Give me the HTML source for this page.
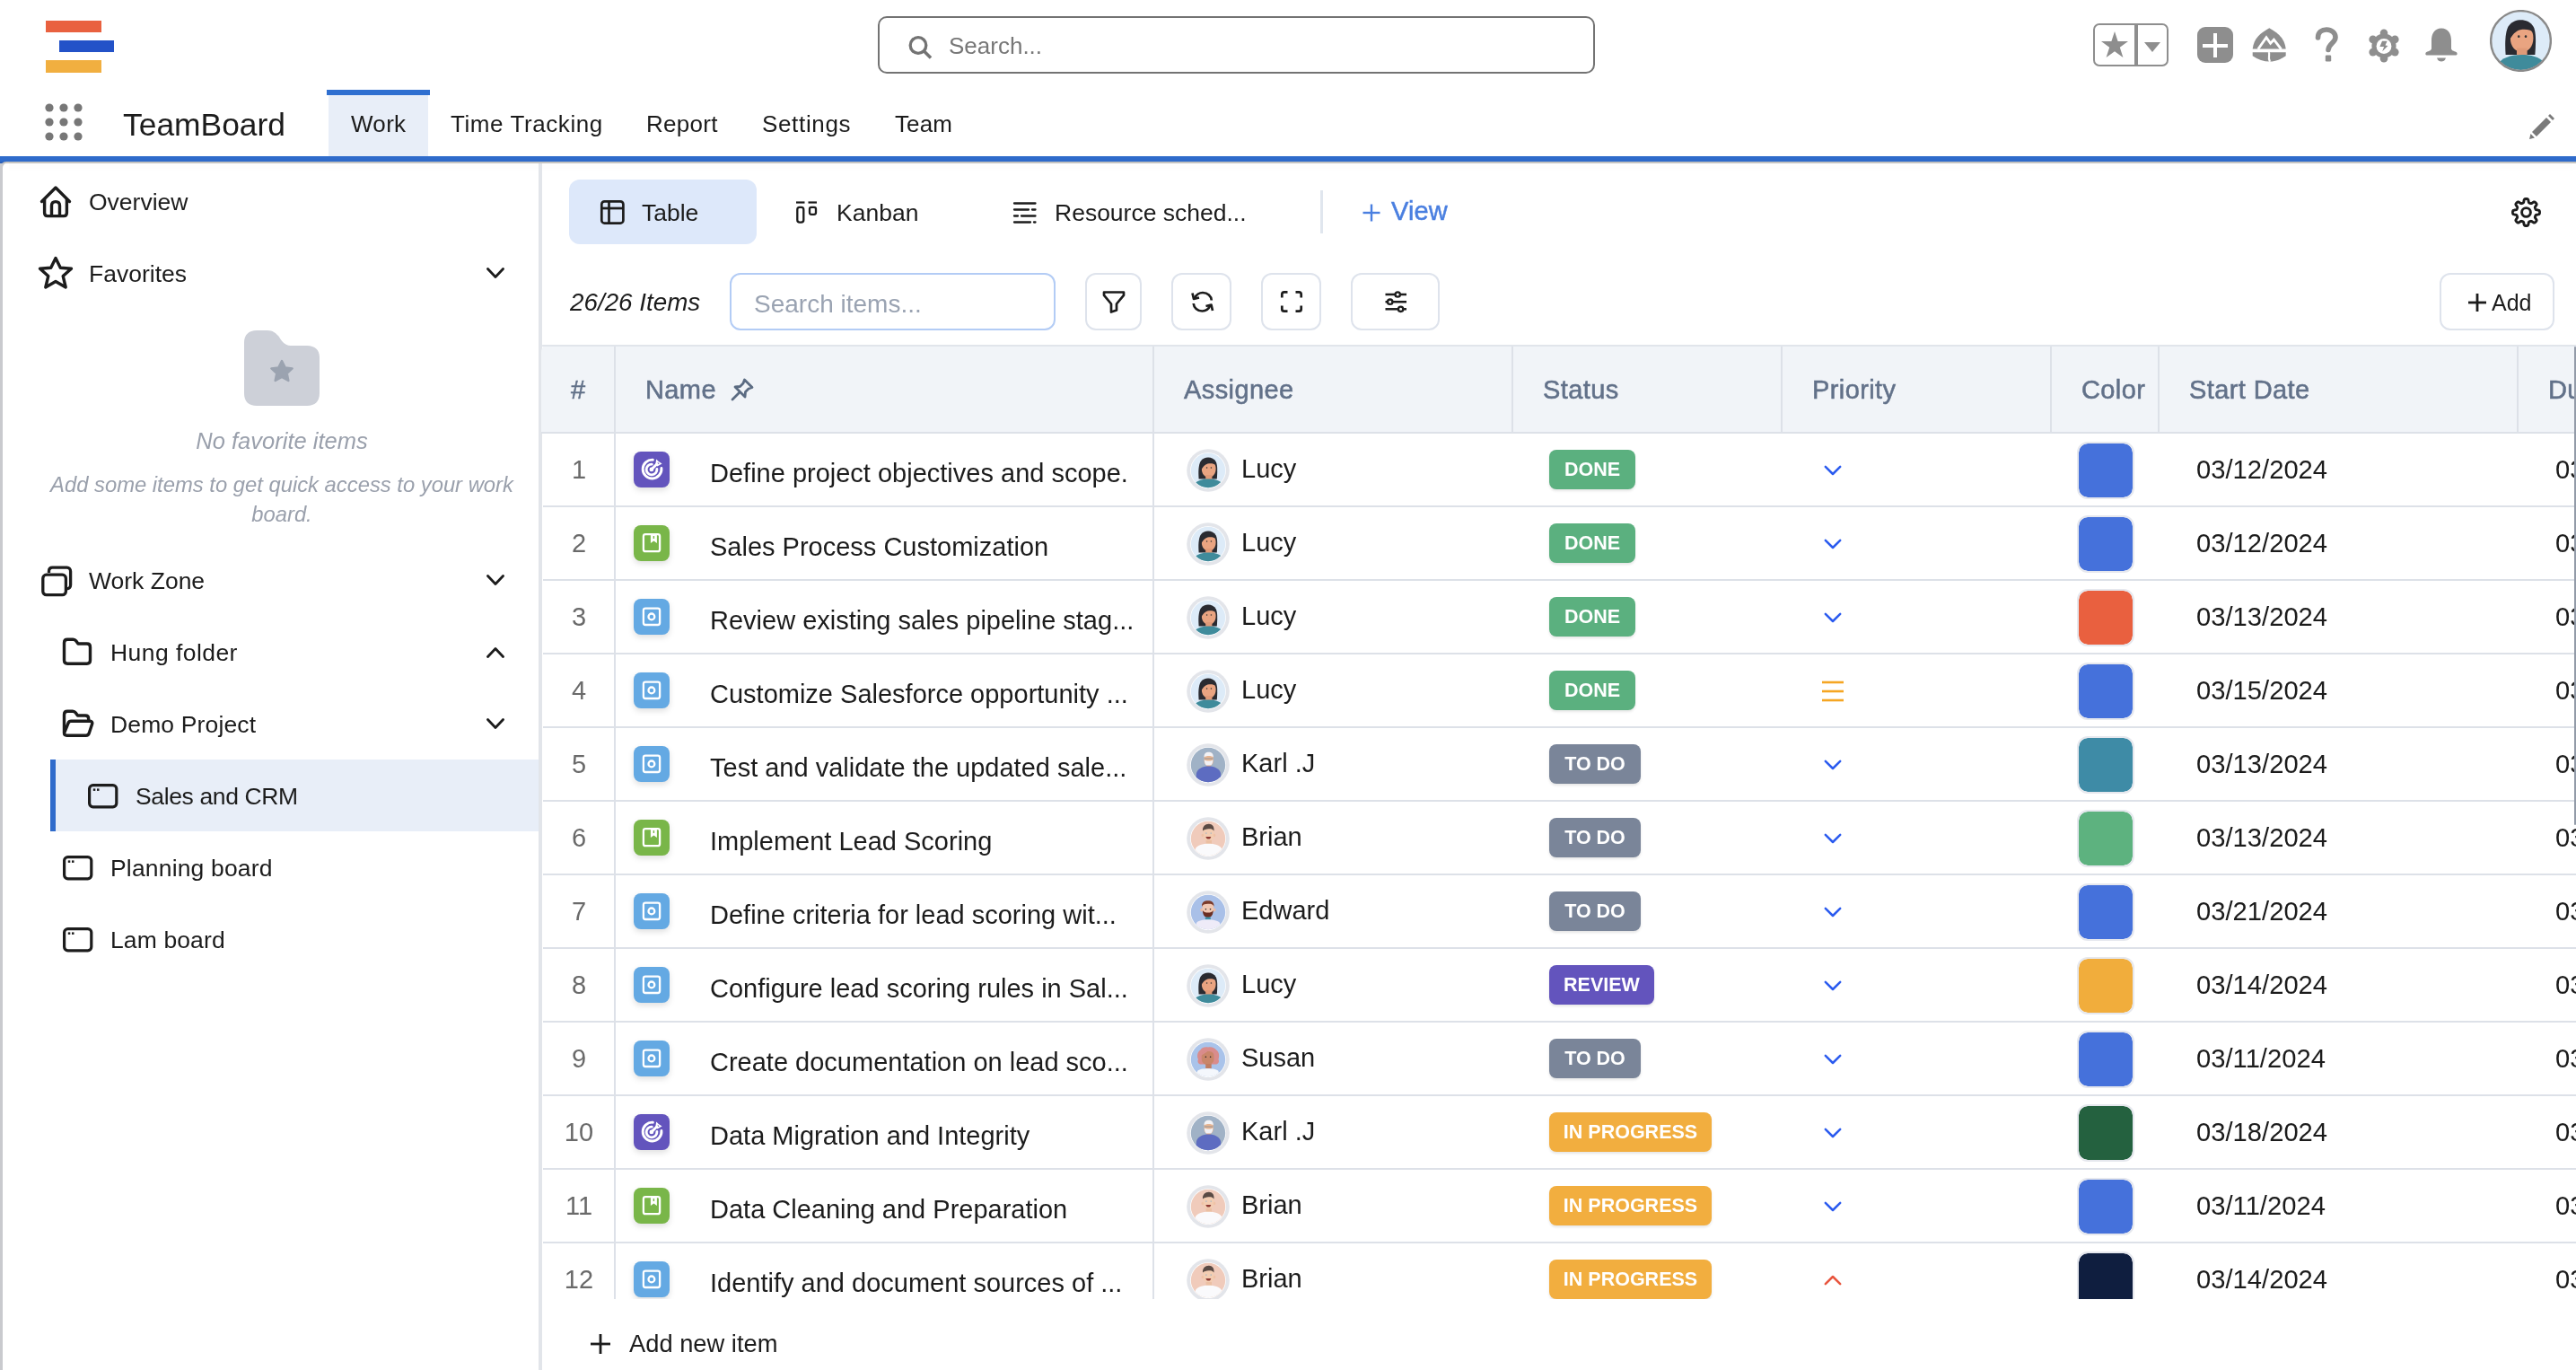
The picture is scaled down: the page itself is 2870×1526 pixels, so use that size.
<!DOCTYPE html>
<html><head><meta charset="utf-8"><title>TeamBoard</title>
<style>
html,body{margin:0;padding:0;width:2870px;height:1526px;overflow:hidden;background:#fff;font-family:"Liberation Sans", sans-serif;}
.a{position:absolute;}
.t{position:absolute;white-space:nowrap;line-height:1;will-change:transform;}
</style></head><body>
<div class="a" style="left:51px;top:23px;width:62px;height:13px;background:#E9613F;"></div><div class="a" style="left:66px;top:45px;width:61px;height:13px;background:#2352C8;"></div><div class="a" style="left:51px;top:67px;width:62px;height:14px;background:#F1AF40;"></div><div class="a" style="left:978px;top:18px;width:799px;height:64px;background:#fff;box-sizing:border-box;border:2px solid #737373;border-radius:10px"></div><svg class="a" style="left:1010px;top:38px" width="32" height="30" viewBox="0 0 32 30"><circle cx="13" cy="12.5" r="8.8" fill="none" stroke="#737373" stroke-width="3.3"/><line x1="19.5" y1="19" x2="27" y2="26.5" stroke="#737373" stroke-width="3.6"/></svg><div class="t" style="left:1056.5px;top:37.9px;font-size:26px;color:#777;font-weight:400;font-style:normal;">Search...</div><div class="a" style="left:2332px;top:26px;width:84px;height:48px;background:transparent;box-sizing:border-box;border:2px solid #8e8e8e;border-radius:7px"></div><div class="a" style="left:2378px;top:27px;width:4px;height:46px;background:#8e8e8e;"></div><svg class="a" style="left:2340px;top:34px" width="32" height="32" viewBox="0 0 32 32"><polygon points="16,1 19.6,12 31,12 21.8,18.8 25.4,30 16,23.2 6.6,30 10.2,18.8 1,12 12.4,12" fill="#8e8e8e"/></svg><svg class="a" style="left:2389px;top:47px" width="18" height="12" viewBox="0 0 18 12"><polygon points="0,0 18,0 9,11" fill="#8e8e8e"/></svg><div class="a" style="left:2448px;top:30px;width:40px;height:40px;background:#8e8e8e;border-radius:9px"></div><div class="a" style="left:2454px;top:49px;width:28px;height:3.5px;background:#fff;"></div><div class="a" style="left:2466px;top:36.5px;width:4px;height:27px;background:#fff;"></div><svg class="a" style="left:2508px;top:30px" width="40" height="40" viewBox="0 0 40 40"><path d="M20.3 1.3 C 10 7, 3 13, 1.7 24.6 L38.7 24.6 C 37.5 13, 30.5 7, 20.3 1.3 Z" fill="#8e8e8e"/><path d="M1.7 28.3 L38.7 28.3 L38.7 32.3 C 33 36.5, 26 38.6, 20.3 38.6 C 14.5 38.6, 7.5 36.5, 1.7 32.3 Z" fill="#8e8e8e"/><path d="M7.8 24.8 L17 11.6 L21.6 18.2 L25.4 14.2 L33.6 24.8" fill="none" stroke="#fff" stroke-width="2.8" stroke-linejoin="miter"/><path d="M19.5 28 C 21.8 30.5, 18 33, 21 38.8" fill="none" stroke="#fff" stroke-width="2.2"/></svg><svg class="a" style="left:2577px;top:30px" width="30" height="40" viewBox="0 0 30 40"><path d="M5.5 12 C 5.5 6, 10 3, 15 3 C 20.5 3, 25 6.5, 25 11.5 C 25 17.5, 17.5 18.5, 17 25.5" fill="none" stroke="#8e8e8e" stroke-width="5.6" stroke-linecap="round"/><rect x="13.8" y="31.5" width="6.4" height="7" rx="1.2" fill="#8e8e8e"/></svg><svg class="a" style="left:2638px;top:31.5px" width="36" height="38" viewBox="0 0 36 38"><circle cx="18" cy="19" r="13.6" fill="#8e8e8e"/><circle cx="18.00" cy="4.80" r="4.3" fill="#8e8e8e"/><circle cx="30.30" cy="11.90" r="4.3" fill="#8e8e8e"/><circle cx="30.30" cy="26.10" r="4.3" fill="#8e8e8e"/><circle cx="18.00" cy="33.20" r="4.3" fill="#8e8e8e"/><circle cx="5.70" cy="26.10" r="4.3" fill="#8e8e8e"/><circle cx="5.70" cy="11.90" r="4.3" fill="#8e8e8e"/><circle cx="18" cy="19.5" r="8.4" fill="#fff"/><path d="M16 13.8 L21.6 13.8 L19.5 18.6 L22.5 18.9 L16.2 25.2 L18.1 20 L13.4 20 Z" fill="#8e8e8e"/></svg><svg class="a" style="left:2701px;top:31px" width="38" height="38" viewBox="0 0 38 38"><path d="M19 0.5 C 27 0.5, 30 7, 30 14 L30 23 C 30 25, 33 26, 35.5 27 C 37 27.5, 37 30.5, 35.5 30.5 L2.5 30.5 C 1 30.5, 1 27.5, 2.5 27 C 5 26, 8 25, 8 23 L8 14 C 8 7, 11 0.5, 19 0.5 Z" fill="#8e8e8e"/><path d="M14 33.5 L24 33.5 C 23 36.5, 21 37.5, 19 37.5 C 17 37.5, 15 36.5, 14 33.5 Z" fill="#8e8e8e"/></svg><svg class="a" style="left:2773.5px;top:10.5px" width="69" height="69" viewBox="8.7 8.7 42.6 42.6"><defs><clipPath id="cpa"><circle cx="30" cy="30" r="20"/></clipPath></defs><g clip-path="url(#cpa)"><rect x="0" y="0" width="60" height="60" fill="#DDEBF8"/><path d="M19.6 39.5 C 19 32, 19.2 24, 21.5 20 C 23.8 16.5, 27 15.6, 30 15.6 C 33.5 15.6, 37 17, 38.8 20.5 C 40.6 24, 40.4 32, 39.8 39.5 Z" fill="#2A2B31"/><path d="M22.8 28 C 22.8 22.5, 26 20.5, 30.8 20.5 C 35.5 20.5, 38.6 22.5, 38.6 28 C 38.6 34, 35.2 37.6, 30.8 37.6 C 26.3 37.6, 22.8 34, 22.8 28 Z" fill="#E9A481"/><path d="M22 30 C 21.5 21, 25.5 17.5, 30.5 17.5 C 35 17.5, 38.5 19.5, 38.7 24 C 36.5 22.3, 33 21.8, 29.5 22.5 C 26.5 23.2, 24 26, 22 30 Z" fill="#2A2B31"/><rect x="27.2" y="35" width="7.2" height="5" fill="#E09A78"/><circle cx="28.6" cy="27" r="0.8" fill="#333"/><circle cx="33.4" cy="27" r="0.8" fill="#333"/><path d="M14.5 50 L15.5 44.5 C 18 41.2, 24 39.6, 30.5 39.6 C 37 39.6, 43 41.2, 45.5 44.5 L46.5 50 Z" fill="#3F8B9B"/></g><circle cx="30" cy="30" r="20.6" fill="none" stroke="#8a8a8a" stroke-width="1.5"/></svg><svg class="a" style="left:50px;top:115px" width="42" height="42" viewBox="0 0 42 42"><circle cx="5" cy="5" r="4.6" fill="#777"/><circle cx="5" cy="21" r="4.6" fill="#777"/><circle cx="5" cy="37" r="4.6" fill="#777"/><circle cx="21" cy="5" r="4.6" fill="#777"/><circle cx="21" cy="21" r="4.6" fill="#777"/><circle cx="21" cy="37" r="4.6" fill="#777"/><circle cx="37" cy="5" r="4.6" fill="#777"/><circle cx="37" cy="21" r="4.6" fill="#777"/><circle cx="37" cy="37" r="4.6" fill="#777"/></svg><div class="t" style="left:137.0px;top:121.9px;font-size:35.4px;color:#1c1c1c;font-weight:400;font-style:normal;">TeamBoard</div><div class="a" style="left:364px;top:100px;width:115px;height:6px;background:#2F6FD0;"></div><div class="a" style="left:366px;top:106px;width:111px;height:68px;background:#E8EEF8;"></div><div class="t" style="left:391.4px;top:124.9px;font-size:26px;color:#1c1c1c;font-weight:400;font-style:normal;letter-spacing:0.3px">Work</div><div class="t" style="left:502.3px;top:124.9px;font-size:26px;color:#1c1c1c;font-weight:400;font-style:normal;letter-spacing:0.58px">Time Tracking</div><div class="t" style="left:719.5px;top:124.9px;font-size:26px;color:#1c1c1c;font-weight:400;font-style:normal;letter-spacing:0.3px">Report</div><div class="t" style="left:848.8px;top:124.9px;font-size:26px;color:#1c1c1c;font-weight:400;font-style:normal;letter-spacing:0.66px">Settings</div><div class="t" style="left:997.2px;top:124.9px;font-size:26px;color:#1c1c1c;font-weight:400;font-style:normal;letter-spacing:0.1px">Team</div><svg class="a" style="left:2816px;top:126px" width="32" height="30" viewBox="0 0 32 30"><path d="M5 21 L21 5 L26 10 L10 26 Z" fill="#7a7a7a"/><path d="M23 3 L25 1 L30 6 L28 8 Z" fill="#7a7a7a"/><path d="M3.5 23 L8 27.5 L2 29 Z" fill="#7a7a7a"/></svg><div class="a" style="left:0px;top:174px;width:2870px;height:6px;background:#2F6BCB;"></div><div class="a" style="left:0px;top:180px;width:2870px;height:2px;background:#C4C3C1;box-shadow:0 3px 10px rgba(0,0,0,0.06)"></div><div class="a" style="left:0px;top:180px;width:8px;height:8px;background:#2A5FB8;"></div><div class="a" style="left:0px;top:180px;width:10px;height:10px;background:#fff;box-sizing:border-box;border-top:2px solid #C9C6C2;border-left:3px solid #C9CACE;border-top-left-radius:7px"></div><div class="a" style="left:0px;top:182px;width:3px;height:1344px;background:#C9CACE;"></div><div class="a" style="left:600px;top:182px;width:4px;height:1344px;background:#E2E5EA;"></div><svg class="a" style="left:42px;top:204px" width="40" height="40" viewBox="0 0 40 40"><path d="M4.5 20.5 L20 5 L35.5 20.5" fill="none" stroke="#1c1c1c" stroke-width="3.4" stroke-linecap="round" stroke-linejoin="round"/><path d="M7.6 18 L7.6 33 C7.6 35.5 9 36.6 11 36.6 L29 36.6 C31 36.6 32.4 35.5 32.4 33 L32.4 18" fill="none" stroke="#1c1c1c" stroke-width="3.4" stroke-linejoin="round"/><path d="M15.5 36 L15.5 25 C15.5 22 17.5 20.6 20 20.6 C22.5 20.6 24.5 22 24.5 25 L24.5 36" fill="none" stroke="#1c1c1c" stroke-width="3.4"/></svg><div class="t" style="left:99.0px;top:211.5px;font-size:26.5px;color:#1c1c1c;font-weight:400;font-style:normal;">Overview</div><svg class="a" style="left:42px;top:284px" width="40" height="40" viewBox="0 0 40 40"><polygon points="20,3.5 25.3,14.2 37.5,15.2 28.2,23.5 31.2,36 20,29.5 8.8,36 11.8,23.5 2.5,15.2 14.7,14.2" fill="none" stroke="#1c1c1c" stroke-width="3.4" stroke-linejoin="round"/></svg><div class="t" style="left:99.0px;top:291.5px;font-size:26.5px;color:#1c1c1c;font-weight:400;font-style:normal;">Favorites</div><svg class="a" style="left:541.5px;top:297.5px" width="20" height="12" viewBox="0 0 20 12"><path d="M1.5 1.5 L10.0 10.5 L18.5 1.5" fill="none" stroke="#1c1c1c" stroke-width="2.8" stroke-linecap="round" stroke-linejoin="round"/></svg><svg class="a" style="left:272px;top:368px" width="84" height="84" viewBox="0 0 84 84"><path d="M0 14 C0 5 5 0 14 0 L26 0 C32 0 35 3 38 6 C41 10 44 17 52 17 L70 17 C79 17 84 22 84 30 L84 70 C84 79 79 84 70 84 L14 84 C5 84 0 79 0 70 Z" fill="#CDD0D8"/><path d="M42 34 L45.6 41.4 L53.6 42.4 L47.7 47.9 L49.3 56 L42 52 L34.7 56 L36.3 47.9 L30.4 42.4 L38.4 41.4 Z" fill="#9BA3B0" stroke="#9BA3B0" stroke-width="2.5" stroke-linejoin="round"/></svg><div class="t" style="left:-86.0px;width:800px;text-align:center;top:479.3px;font-size:25.5px;color:#9AA0AC;font-weight:400;font-style:italic">No favorite items</div><div class="t" style="left:-86.0px;width:800px;text-align:center;top:528.3px;font-size:23.8px;color:#9AA0AC;font-weight:400;font-style:italic">Add some items to get quick access to your work</div><div class="t" style="left:-86.0px;width:800px;text-align:center;top:561.3px;font-size:23.8px;color:#9AA0AC;font-weight:400;font-style:italic">board.</div><svg class="a" style="left:44px;top:630px" width="38" height="36" viewBox="0 0 38 36"><path d="M10.5 8 L10.5 6.5 C10.5 4, 12 2.2, 14.5 2.2 L30.5 2.2 C33 2.2, 34.6 4, 34.6 6.5 L34.6 21.5 C34.6 24, 33 25.8, 30.5 25.8 L29.5 25.8" fill="none" stroke="#1c1c1c" stroke-width="3.3" stroke-linejoin="round"/><rect x="3.8" y="10.2" width="25.6" height="22.5" rx="4" fill="none" stroke="#1c1c1c" stroke-width="3.3"/></svg><div class="t" style="left:99.0px;top:633.5px;font-size:26.5px;color:#1c1c1c;font-weight:400;font-style:normal;">Work Zone</div><svg class="a" style="left:541.5px;top:639.5px" width="20" height="12" viewBox="0 0 20 12"><path d="M1.5 1.5 L10.0 10.5 L18.5 1.5" fill="none" stroke="#1c1c1c" stroke-width="2.8" stroke-linecap="round" stroke-linejoin="round"/></svg><svg class="a" style="left:68px;top:710px" width="36" height="32" viewBox="0 0 36 32"><path d="M3.5 6 C3.5 3.8 5 2.3 7.2 2.3 L13.5 2.3 C15 2.3 16 3 17 4.2 L19 7 L28.8 7 C31 7 32.5 8.5 32.5 10.7 L32.5 25.5 C32.5 27.7 31 29.2 28.8 29.2 L7.2 29.2 C5 29.2 3.5 27.7 3.5 25.5 Z" fill="none" stroke="#1c1c1c" stroke-width="3.4" stroke-linejoin="round"/></svg><div class="t" style="left:123.0px;top:713.5px;font-size:26.5px;color:#1c1c1c;font-weight:400;font-style:normal;letter-spacing:0.44px">Hung folder</div><svg class="a" style="left:541.5px;top:721px" width="20" height="12" viewBox="0 0 20 12"><path d="M1.5 10.5 L10.0 1.5 L18.5 10.5" fill="none" stroke="#1c1c1c" stroke-width="2.8" stroke-linecap="round" stroke-linejoin="round"/></svg><svg class="a" style="left:68px;top:790px" width="38" height="32" viewBox="0 0 38 32"><path d="M3.5 26 L3.5 6 C3.5 3.8 5 2.3 7.2 2.3 L13 2.3 C14.5 2.3 15.5 3 16.5 4.2 L18.5 7 L27 7 C29.2 7 30.7 8.5 30.7 10.7 L30.7 13" fill="none" stroke="#1c1c1c" stroke-width="3.4" stroke-linejoin="round"/><path d="M3.5 26.5 L8 15.5 C8.6 14 9.6 13.3 11.2 13.3 L32.5 13.3 C34.3 13.3 35.2 14.6 34.7 16.2 L31.3 26.5 C30.8 28.2 29.6 29.2 27.8 29.2 L6.5 29.2 C4.5 29.2 3.5 28 3.5 26.5 Z" fill="none" stroke="#1c1c1c" stroke-width="3.4" stroke-linejoin="round"/></svg><div class="t" style="left:123.0px;top:793.5px;font-size:26.5px;color:#1c1c1c;font-weight:400;font-style:normal;letter-spacing:0.14px">Demo Project</div><svg class="a" style="left:541.5px;top:800px" width="20" height="12" viewBox="0 0 20 12"><path d="M1.5 1.5 L10.0 10.5 L18.5 1.5" fill="none" stroke="#1c1c1c" stroke-width="2.8" stroke-linecap="round" stroke-linejoin="round"/></svg><div class="a" style="left:56px;top:846px;width:6px;height:80px;background:#2F6BCB;"></div><div class="a" style="left:62px;top:846px;width:538px;height:80px;background:#E8EEF8;"></div><svg class="a" style="left:97.5px;top:873px" width="34" height="28" viewBox="0 0 34 28"><rect x="1.6" y="1.6" width="30.2" height="24.2" rx="4" fill="none" stroke="#1c1c1c" stroke-width="3.2"/><rect x="5.8" y="5.4" width="2.5" height="2.5" fill="#1c1c1c"/><rect x="10" y="5.4" width="2.5" height="2.5" fill="#1c1c1c"/></svg><div class="t" style="left:151.0px;top:873.5px;font-size:26.5px;color:#1c1c1c;font-weight:400;font-style:normal;letter-spacing:-0.37px">Sales and CRM</div><svg class="a" style="left:69.5px;top:953px" width="34" height="28" viewBox="0 0 34 28"><rect x="1.6" y="1.6" width="30.2" height="24.2" rx="4" fill="none" stroke="#1c1c1c" stroke-width="3.2"/><rect x="5.8" y="5.4" width="2.5" height="2.5" fill="#1c1c1c"/><rect x="10" y="5.4" width="2.5" height="2.5" fill="#1c1c1c"/></svg><div class="t" style="left:123.0px;top:953.5px;font-size:26.5px;color:#1c1c1c;font-weight:400;font-style:normal;letter-spacing:0.17px">Planning board</div><svg class="a" style="left:69.5px;top:1033px" width="34" height="28" viewBox="0 0 34 28"><rect x="1.6" y="1.6" width="30.2" height="24.2" rx="4" fill="none" stroke="#1c1c1c" stroke-width="3.2"/><rect x="5.8" y="5.4" width="2.5" height="2.5" fill="#1c1c1c"/><rect x="10" y="5.4" width="2.5" height="2.5" fill="#1c1c1c"/></svg><div class="t" style="left:123.0px;top:1033.5px;font-size:26.5px;color:#1c1c1c;font-weight:400;font-style:normal;letter-spacing:0.12px">Lam board</div><div class="a" style="left:634px;top:200px;width:209px;height:72px;background:#DDE8FA;border-radius:12px"></div><svg class="a" style="left:667px;top:221px" width="30" height="30" viewBox="0 0 30 30"><rect x="3.3" y="3.3" width="24.1" height="24.3" rx="3.2" fill="none" stroke="#1c1c1c" stroke-width="2.7"/><line x1="3.3" y1="11" x2="27.4" y2="11" stroke="#1c1c1c" stroke-width="2.7"/><line x1="11.5" y1="3.3" x2="11.5" y2="27.6" stroke="#1c1c1c" stroke-width="2.7"/></svg><div class="t" style="left:715.0px;top:223.5px;font-size:26.5px;color:#1c1c1c;font-weight:400;font-style:normal;">Table</div><svg class="a" style="left:884px;top:222px" width="30" height="28" viewBox="0 0 30 28"><line x1="3" y1="3.5" x2="12.5" y2="3.5" stroke="#1c1c1c" stroke-width="2.2"/><line x1="16.5" y1="3.5" x2="26" y2="3.5" stroke="#1c1c1c" stroke-width="2.2"/><rect x="4.3" y="8.8" width="7" height="16.9" rx="2.6" fill="none" stroke="#1c1c1c" stroke-width="2.3"/><rect x="18" y="8.8" width="7" height="8" rx="2" fill="none" stroke="#1c1c1c" stroke-width="2.3"/></svg><div class="t" style="left:932.0px;top:223.5px;font-size:26.5px;color:#1c1c1c;font-weight:400;font-style:normal;">Kanban</div><svg class="a" style="left:1127px;top:223px" width="30" height="28" viewBox="0 0 30 28"><line x1="3" y1="3.5" x2="26.5" y2="3.5" stroke="#1c1c1c" stroke-width="2.3" stroke-linecap="round"/><line x1="3" y1="10.5" x2="19" y2="10.5" stroke="#1c1c1c" stroke-width="2.3" stroke-linecap="round"/><line x1="23" y1="10.5" x2="26.5" y2="10.5" stroke="#1c1c1c" stroke-width="2.3" stroke-linecap="round"/><line x1="3" y1="17.5" x2="7" y2="17.5" stroke="#1c1c1c" stroke-width="2.3" stroke-linecap="round"/><line x1="11" y1="17.5" x2="26.5" y2="17.5" stroke="#1c1c1c" stroke-width="2.3" stroke-linecap="round"/><line x1="3" y1="24.5" x2="21" y2="24.5" stroke="#1c1c1c" stroke-width="2.3" stroke-linecap="round"/><line x1="25" y1="24.5" x2="26.5" y2="24.5" stroke="#1c1c1c" stroke-width="2.3" stroke-linecap="round"/></svg><div class="t" style="left:1174.5px;top:223.5px;font-size:26.5px;color:#1c1c1c;font-weight:400;font-style:normal;">Resource sched...</div><div class="a" style="left:1471px;top:212px;width:3px;height:48px;background:#E0E6EE;"></div><svg class="a" style="left:1516px;top:225px" width="24" height="24" viewBox="0 0 24 24"><line x1="12" y1="2.5" x2="12" y2="21.5" stroke="#4A7FE0" stroke-width="2.4"/><line x1="2.5" y1="12" x2="21.5" y2="12" stroke="#4A7FE0" stroke-width="2.4"/></svg><div class="t" style="left:1550.0px;top:221.3px;font-size:29px;color:#4A7FE0;font-weight:400;font-style:normal;-webkit-text-stroke:0.5px #4A7FE0;letter-spacing:0.1px">View</div><svg class="a" style="left:2796px;top:218px" width="37" height="37" viewBox="0 0 37 37"><path d="M18.50 3.50 L18.89 3.51 L19.28 3.54 L19.67 3.61 L20.05 3.74 L20.41 3.98 L20.72 4.46 L20.95 5.26 L21.11 6.24 L21.25 7.04 L21.44 7.53 L21.67 7.80 L21.92 7.98 L22.18 8.11 L22.44 8.23 L22.71 8.34 L22.98 8.45 L23.25 8.55 L23.52 8.64 L23.82 8.70 L24.18 8.66 L24.66 8.45 L25.33 7.99 L26.13 7.40 L26.85 7.00 L27.41 6.88 L27.84 6.96 L28.20 7.14 L28.52 7.37 L28.82 7.62 L29.11 7.89 L29.38 8.18 L29.63 8.48 L29.86 8.80 L30.04 9.16 L30.12 9.59 L30.00 10.15 L29.60 10.87 L29.01 11.67 L28.55 12.34 L28.34 12.82 L28.30 13.18 L28.36 13.48 L28.45 13.75 L28.55 14.02 L28.66 14.29 L28.77 14.56 L28.89 14.82 L29.02 15.08 L29.20 15.33 L29.47 15.56 L29.96 15.75 L30.76 15.89 L31.74 16.05 L32.54 16.28 L33.02 16.59 L33.26 16.95 L33.39 17.33 L33.46 17.72 L33.49 18.11 L33.50 18.50 L33.49 18.89 L33.46 19.28 L33.39 19.67 L33.26 20.05 L33.02 20.41 L32.54 20.72 L31.74 20.95 L30.76 21.11 L29.96 21.25 L29.47 21.44 L29.20 21.67 L29.02 21.92 L28.89 22.18 L28.77 22.44 L28.66 22.71 L28.55 22.98 L28.45 23.25 L28.36 23.52 L28.30 23.82 L28.34 24.18 L28.55 24.66 L29.01 25.33 L29.60 26.13 L30.00 26.85 L30.12 27.41 L30.04 27.84 L29.86 28.20 L29.63 28.52 L29.38 28.82 L29.11 29.11 L28.82 29.38 L28.52 29.63 L28.20 29.86 L27.84 30.04 L27.41 30.12 L26.85 30.00 L26.13 29.60 L25.33 29.01 L24.66 28.55 L24.18 28.34 L23.82 28.30 L23.52 28.36 L23.25 28.45 L22.98 28.55 L22.71 28.66 L22.44 28.77 L22.18 28.89 L21.92 29.02 L21.67 29.20 L21.44 29.47 L21.25 29.96 L21.11 30.76 L20.95 31.74 L20.72 32.54 L20.41 33.02 L20.05 33.26 L19.67 33.39 L19.28 33.46 L18.89 33.49 L18.50 33.50 L18.11 33.49 L17.72 33.46 L17.33 33.39 L16.95 33.26 L16.59 33.02 L16.28 32.54 L16.05 31.74 L15.89 30.76 L15.75 29.96 L15.56 29.47 L15.33 29.20 L15.08 29.02 L14.82 28.89 L14.56 28.77 L14.29 28.66 L14.02 28.55 L13.75 28.45 L13.48 28.36 L13.18 28.30 L12.82 28.34 L12.34 28.55 L11.67 29.01 L10.87 29.60 L10.15 30.00 L9.59 30.12 L9.16 30.04 L8.80 29.86 L8.48 29.63 L8.18 29.38 L7.89 29.11 L7.62 28.82 L7.37 28.52 L7.14 28.20 L6.96 27.84 L6.88 27.41 L7.00 26.85 L7.40 26.13 L7.99 25.33 L8.45 24.66 L8.66 24.18 L8.70 23.82 L8.64 23.52 L8.55 23.25 L8.45 22.98 L8.34 22.71 L8.23 22.44 L8.11 22.18 L7.98 21.92 L7.80 21.67 L7.53 21.44 L7.04 21.25 L6.24 21.11 L5.26 20.95 L4.46 20.72 L3.98 20.41 L3.74 20.05 L3.61 19.67 L3.54 19.28 L3.51 18.89 L3.50 18.50 L3.51 18.11 L3.54 17.72 L3.61 17.33 L3.74 16.95 L3.98 16.59 L4.46 16.28 L5.26 16.05 L6.24 15.89 L7.04 15.75 L7.53 15.56 L7.80 15.33 L7.98 15.08 L8.11 14.82 L8.23 14.56 L8.34 14.29 L8.45 14.02 L8.55 13.75 L8.64 13.48 L8.70 13.18 L8.66 12.82 L8.45 12.34 L7.99 11.67 L7.40 10.87 L7.00 10.15 L6.88 9.59 L6.96 9.16 L7.14 8.80 L7.37 8.48 L7.62 8.18 L7.89 7.89 L8.18 7.62 L8.48 7.37 L8.80 7.14 L9.16 6.96 L9.59 6.88 L10.15 7.00 L10.87 7.40 L11.67 7.99 L12.34 8.45 L12.82 8.66 L13.18 8.70 L13.48 8.64 L13.75 8.55 L14.02 8.45 L14.29 8.34 L14.56 8.23 L14.82 8.11 L15.08 7.98 L15.33 7.80 L15.56 7.53 L15.75 7.04 L15.89 6.24 L16.05 5.26 L16.28 4.46 L16.59 3.98 L16.95 3.74 L17.33 3.61 L17.72 3.54 L18.11 3.51 L18.50 3.50 Z" fill="none" stroke="#1c1c1c" stroke-width="2.9" stroke-linejoin="round"/><circle cx="18.5" cy="18.5" r="4.9" fill="none" stroke="#1c1c1c" stroke-width="2.9"/></svg><div class="t" style="left:634.5px;top:323.4px;font-size:27.8px;color:#1c1c1c;font-weight:400;font-style:italic;">26/26 Items</div><div class="a" style="left:813px;top:304px;width:363px;height:64px;background:#fff;box-sizing:border-box;border:2px solid #B3CCF5;border-radius:12px"></div><div class="t" style="left:840.0px;top:324.7px;font-size:28px;color:#9AA3B2;font-weight:400;font-style:normal;">Search items...</div><div class="a" style="left:1209px;top:304px;width:63px;height:64px;background:#fff;box-sizing:border-box;border:2px solid #DEE3EC;border-radius:12px"></div><div class="a" style="left:1305px;top:304px;width:67px;height:64px;background:#fff;box-sizing:border-box;border:2px solid #DEE3EC;border-radius:12px"></div><div class="a" style="left:1405px;top:304px;width:67px;height:64px;background:#fff;box-sizing:border-box;border:2px solid #DEE3EC;border-radius:12px"></div><div class="a" style="left:1505px;top:304px;width:99px;height:64px;background:#fff;box-sizing:border-box;border:2px solid #DEE3EC;border-radius:12px"></div><svg class="a" style="left:1227px;top:322px" width="28" height="30" viewBox="0 0 28 30"><path d="M3 3.5 L25 3.5 L25 6.8 L17 16.5 L17 23.5 L11 25.5 L11 16.5 L3 6.8 Z" fill="none" stroke="#1c1c1c" stroke-width="2.7" stroke-linejoin="round"/></svg><svg class="a" style="left:1325.5px;top:323px" width="27" height="26" viewBox="0 0 27 26"><path d="M5 9 C 7 5, 10.5 3, 14 3 C 19.5 3, 23.5 7, 23.8 11.5" fill="none" stroke="#1c1c1c" stroke-width="2.7"/><path d="M22.5 17 C 20.5 21.5, 17 23.5, 13.5 23.5 C 8 23.5, 4 19.5, 3.7 15" fill="none" stroke="#1c1c1c" stroke-width="2.7"/><path d="M2.5 3.5 L4 10 L10 8.5" fill="none" stroke="#1c1c1c" stroke-width="2.7" stroke-linejoin="round"/><path d="M25 23 L23.5 16.5 L17.5 18" fill="none" stroke="#1c1c1c" stroke-width="2.7" stroke-linejoin="round"/></svg><svg class="a" style="left:1426px;top:323px" width="26" height="26" viewBox="0 0 26 26"><path d="M2.3 8.5 L2.3 4.8 C2.3 3.3 3.3 2.3 4.8 2.3 L8.5 2.3" fill="none" stroke="#1c1c1c" stroke-width="2.7"/><path d="M17.5 2.3 L21.2 2.3 C22.7 2.3 23.7 3.3 23.7 4.8 L23.7 8.5" fill="none" stroke="#1c1c1c" stroke-width="2.7"/><path d="M23.7 17.5 L23.7 21.2 C23.7 22.7 22.7 23.7 21.2 23.7 L17.5 23.7" fill="none" stroke="#1c1c1c" stroke-width="2.7"/><path d="M8.5 23.7 L4.8 23.7 C3.3 23.7 2.3 22.7 2.3 21.2 L2.3 17.5" fill="none" stroke="#1c1c1c" stroke-width="2.7"/></svg><svg class="a" style="left:1541px;top:323px" width="28" height="28" viewBox="0 0 28 28"><line x1="2.5" y1="5" x2="26" y2="5" stroke="#1c1c1c" stroke-width="2.5"/><line x1="2.5" y1="13.2" x2="26" y2="13.2" stroke="#1c1c1c" stroke-width="2.5"/><line x1="2.5" y1="21.3" x2="26" y2="21.3" stroke="#1c1c1c" stroke-width="2.5"/><circle cx="16.2" cy="5" r="2.7" fill="#fff" stroke="#1c1c1c" stroke-width="2.3"/><circle cx="7.7" cy="13.2" r="2.7" fill="#fff" stroke="#1c1c1c" stroke-width="2.3"/><circle cx="19.6" cy="21.3" r="2.7" fill="#fff" stroke="#1c1c1c" stroke-width="2.3"/></svg><div class="a" style="left:2718px;top:304px;width:128px;height:64px;background:#fff;box-sizing:border-box;border:2px solid #DEE3EC;border-radius:12px"></div><svg class="a" style="left:2748.5px;top:325.5px" width="22" height="22" viewBox="0 0 22 22"><line x1="11" y1="1" x2="11" y2="21" stroke="#1c1c1c" stroke-width="2.8"/><line x1="1" y1="11" x2="21" y2="11" stroke="#1c1c1c" stroke-width="2.8"/></svg><div class="t" style="left:2776.0px;top:324.8px;font-size:25px;color:#1c1c1c;font-weight:400;font-style:normal;">Add</div><div class="a" style="left:603px;top:384px;width:2267px;height:98px;background:#F1F4F8;border-top-left-radius:8px"></div><div class="a" style="left:603px;top:384px;width:2267px;height:2px;background:#E1E5EB;border-top-left-radius:8px"></div><div class="a" style="left:603px;top:481px;width:2267px;height:2px;background:#DDE1E8;"></div><div class="a" style="left:684px;top:386px;width:2px;height:95px;background:#DDE1E8;"></div><div class="a" style="left:1284px;top:386px;width:2px;height:95px;background:#DDE1E8;"></div><div class="a" style="left:1684px;top:386px;width:2px;height:95px;background:#DDE1E8;"></div><div class="a" style="left:1984px;top:386px;width:2px;height:95px;background:#DDE1E8;"></div><div class="a" style="left:2284px;top:386px;width:2px;height:95px;background:#DDE1E8;"></div><div class="a" style="left:2404px;top:386px;width:2px;height:95px;background:#DDE1E8;"></div><div class="a" style="left:2804px;top:386px;width:2px;height:95px;background:#DDE1E8;"></div><div class="a" style="left:684px;top:483px;width:2px;height:964px;background:#DDE1E8;"></div><div class="a" style="left:1284px;top:483px;width:2px;height:964px;background:#DDE1E8;"></div><div class="t" style="left:636.0px;top:420.4px;font-size:29px;color:#627189;font-weight:400;font-style:normal;-webkit-text-stroke:0.55px #627189;letter-spacing:0.4px">#</div><div class="t" style="left:719.0px;top:420.4px;font-size:29px;color:#627189;font-weight:400;font-style:normal;-webkit-text-stroke:0.55px #627189;letter-spacing:0.4px">Name</div><svg class="a" style="left:813px;top:420px" width="28" height="28" viewBox="0 0 28 28"><path d="M16.5 3 L25 11.5 L21 13 L17.5 16.5 L17 22 L6 11 L11.5 10.5 L15 7 Z" fill="none" stroke="#5B6B82" stroke-width="2.8" stroke-linejoin="round"/><line x1="10.5" y1="17.5" x2="3" y2="25" stroke="#5B6B82" stroke-width="2.8" stroke-linecap="round"/></svg><div class="t" style="left:1319.0px;top:420.4px;font-size:29px;color:#627189;font-weight:400;font-style:normal;-webkit-text-stroke:0.55px #627189;letter-spacing:0.4px">Assignee</div><div class="t" style="left:1718.5px;top:420.4px;font-size:29px;color:#627189;font-weight:400;font-style:normal;-webkit-text-stroke:0.55px #627189;letter-spacing:0.4px">Status</div><div class="t" style="left:2019.0px;top:420.4px;font-size:29px;color:#627189;font-weight:400;font-style:normal;-webkit-text-stroke:0.55px #627189;letter-spacing:0.4px">Priority</div><div class="t" style="left:2318.5px;top:420.4px;font-size:29px;color:#627189;font-weight:400;font-style:normal;-webkit-text-stroke:0.55px #627189;letter-spacing:0.4px">Color</div><div class="t" style="left:2438.8px;top:420.4px;font-size:29px;color:#627189;font-weight:400;font-style:normal;-webkit-text-stroke:0.55px #627189;letter-spacing:0.4px">Start Date</div><div class="t" style="left:2839.0px;top:420.4px;font-size:29px;color:#627189;font-weight:400;font-style:normal;-webkit-text-stroke:0.55px #627189;letter-spacing:0.4px">Du</div><div class="a" style="left:605px;top:483px;width:2265px;height:964px;overflow:hidden"><div class="a" style="left:0;top:80px;width:2265px;height:2px;background:#DDE1E8"></div><div class="t" style="left:10.0px;width:60px;text-align:center;top:26.4px;font-size:29px;color:#6a6a6a;font-weight:400;font-style:normal">1</div><div class="a" style="left:101px;top:20px;width:40px;height:40px"><svg class="a" style="left:0px;top:0px;filter:drop-shadow(0 3px 3px rgba(0,0,0,0.12))" width="40" height="40" viewBox="0 0 40 40"><rect width="40" height="40" rx="8" fill="#6354BD"/><path d="M30.9 18.4 A 10.4 10.4 0 1 1 21.4 9.2" fill="none" stroke="#fff" stroke-width="2.9" stroke-linecap="round"/><path d="M25.9 19.4 A 5.9 5.9 0 1 1 20.3 14.1" fill="none" stroke="#fff" stroke-width="2.9" stroke-linecap="round"/><circle cx="19.9" cy="19.9" r="2.4" fill="#fff"/><line x1="19.9" y1="19.9" x2="26.5" y2="13.3" stroke="#fff" stroke-width="2.9" stroke-linecap="round"/><path d="M24.2 14.6 L25.2 8.6 L27.8 11.0 L31.6 13.6 L26.3 16.6 Z" fill="#fff"/><path d="M26.4 11.8 L27.4 14.0 L28.6 13.2 Z" fill="#6354BD"/></svg></div><div class="t" style="left:186.0px;top:29.9px;font-size:29px;color:#1c1c1c;font-weight:400;font-style:normal;">Define project objectives and scope.</div><svg class="a" style="left:711px;top:11px" width="60" height="60" viewBox="0 0 60 60"><defs><clipPath id="c0"><circle cx="30" cy="30" r="19.2"/></clipPath></defs><circle cx="30" cy="30" r="23.8" fill="#E3E5EA"/><circle cx="30" cy="30" r="19.9" fill="#fff"/><g clip-path="url(#c0)"><rect x="0" y="0" width="60" height="60" fill="#DDEBF8"/><path d="M19.6 39.5 C 19 32, 19.2 24, 21.5 20 C 23.8 16.5, 27 15.6, 30 15.6 C 33.5 15.6, 37 17, 38.8 20.5 C 40.6 24, 40.4 32, 39.8 39.5 Z" fill="#2A2B31"/><path d="M22.8 28 C 22.8 22.5, 26 20.5, 30.8 20.5 C 35.5 20.5, 38.6 22.5, 38.6 28 C 38.6 34, 35.2 37.6, 30.8 37.6 C 26.3 37.6, 22.8 34, 22.8 28 Z" fill="#E9A481"/><path d="M22 30 C 21.5 21, 25.5 17.5, 30.5 17.5 C 35 17.5, 38.5 19.5, 38.7 24 C 36.5 22.3, 33 21.8, 29.5 22.5 C 26.5 23.2, 24 26, 22 30 Z" fill="#2A2B31"/><rect x="27.2" y="35" width="7.2" height="5" fill="#E09A78"/><circle cx="28.6" cy="27" r="0.8" fill="#333"/><circle cx="33.4" cy="27" r="0.8" fill="#333"/><path d="M14.5 50 L15.5 44.5 C 18 41.2, 24 39.6, 30.5 39.6 C 37 39.6, 43 41.2, 45.5 44.5 L46.5 50 Z" fill="#3F8B9B"/></g></svg><div class="t" style="left:778.0px;top:24.9px;font-size:29px;color:#1c1c1c;font-weight:400;font-style:normal;">Lucy</div><div class="a" style="left:1121px;top:18px;width:96px;height:44px;background:#5BB07F;border-radius:8px;box-shadow:0 2px 3px rgba(0,0,0,0.10)"></div><div class="t" style="left:1121px;width:96px;text-align:center;top:29.9px;font-size:21.5px;font-weight:700;color:#fff">DONE</div><svg class="a" style="left:1426px;top:33.5px" width="22" height="14" viewBox="0 0 22 14"><path d="M2.8 2.8 L11 11 L19.2 2.8" fill="none" stroke="#2B5BEF" stroke-width="2.5" stroke-linecap="round" stroke-linejoin="round"/></svg><div class="a" style="left:1709px;top:8.5px;width:64px;height:64px;box-sizing:border-box;border:2px solid #E6E8EE;border-radius:12px;background:#4571DB;background-clip:padding-box"></div><div class="t" style="left:1842.0px;top:25.7px;font-size:29.2px;color:#1c1c1c;font-weight:400;font-style:normal;">03/12/2024</div><div class="t" style="left:2241.8px;top:25.7px;font-size:29.2px;color:#1c1c1c;font-weight:400;font-style:normal;">03/12/2024</div><div class="a" style="left:0;top:162px;width:2265px;height:2px;background:#DDE1E8"></div><div class="t" style="left:10.0px;width:60px;text-align:center;top:108.3px;font-size:29px;color:#6a6a6a;font-weight:400;font-style:normal">2</div><div class="a" style="left:101px;top:102px;width:40px;height:40px"><svg class="a" style="left:0px;top:0px;filter:drop-shadow(0 3px 3px rgba(0,0,0,0.12))" width="40" height="40" viewBox="0 0 40 40"><rect width="40" height="40" rx="8" fill="#79B649"/><rect x="10.9" y="10.2" width="18.2" height="19" rx="2.2" fill="none" stroke="#fff" stroke-width="2.3"/><path d="M18.9 10.5 L18.9 20 L22.4 17.6 L25.9 20 L25.9 10.5 Z" fill="#fff"/><rect x="21.7" y="12" width="1.4" height="3" fill="#79B649"/></svg></div><div class="t" style="left:186.0px;top:111.8px;font-size:29px;color:#1c1c1c;font-weight:400;font-style:normal;">Sales Process Customization</div><svg class="a" style="left:711px;top:93px" width="60" height="60" viewBox="0 0 60 60"><defs><clipPath id="c1"><circle cx="30" cy="30" r="19.2"/></clipPath></defs><circle cx="30" cy="30" r="23.8" fill="#E3E5EA"/><circle cx="30" cy="30" r="19.9" fill="#fff"/><g clip-path="url(#c1)"><rect x="0" y="0" width="60" height="60" fill="#DDEBF8"/><path d="M19.6 39.5 C 19 32, 19.2 24, 21.5 20 C 23.8 16.5, 27 15.6, 30 15.6 C 33.5 15.6, 37 17, 38.8 20.5 C 40.6 24, 40.4 32, 39.8 39.5 Z" fill="#2A2B31"/><path d="M22.8 28 C 22.8 22.5, 26 20.5, 30.8 20.5 C 35.5 20.5, 38.6 22.5, 38.6 28 C 38.6 34, 35.2 37.6, 30.8 37.6 C 26.3 37.6, 22.8 34, 22.8 28 Z" fill="#E9A481"/><path d="M22 30 C 21.5 21, 25.5 17.5, 30.5 17.5 C 35 17.5, 38.5 19.5, 38.7 24 C 36.5 22.3, 33 21.8, 29.5 22.5 C 26.5 23.2, 24 26, 22 30 Z" fill="#2A2B31"/><rect x="27.2" y="35" width="7.2" height="5" fill="#E09A78"/><circle cx="28.6" cy="27" r="0.8" fill="#333"/><circle cx="33.4" cy="27" r="0.8" fill="#333"/><path d="M14.5 50 L15.5 44.5 C 18 41.2, 24 39.6, 30.5 39.6 C 37 39.6, 43 41.2, 45.5 44.5 L46.5 50 Z" fill="#3F8B9B"/></g></svg><div class="t" style="left:778.0px;top:106.8px;font-size:29px;color:#1c1c1c;font-weight:400;font-style:normal;">Lucy</div><div class="a" style="left:1121px;top:100px;width:96px;height:44px;background:#5BB07F;border-radius:8px;box-shadow:0 2px 3px rgba(0,0,0,0.10)"></div><div class="t" style="left:1121px;width:96px;text-align:center;top:111.9px;font-size:21.5px;font-weight:700;color:#fff">DONE</div><svg class="a" style="left:1426px;top:115.5px" width="22" height="14" viewBox="0 0 22 14"><path d="M2.8 2.8 L11 11 L19.2 2.8" fill="none" stroke="#2B5BEF" stroke-width="2.5" stroke-linecap="round" stroke-linejoin="round"/></svg><div class="a" style="left:1709px;top:90.5px;width:64px;height:64px;box-sizing:border-box;border:2px solid #E6E8EE;border-radius:12px;background:#4571DB;background-clip:padding-box"></div><div class="t" style="left:1842.0px;top:107.7px;font-size:29.2px;color:#1c1c1c;font-weight:400;font-style:normal;">03/12/2024</div><div class="t" style="left:2241.8px;top:107.7px;font-size:29.2px;color:#1c1c1c;font-weight:400;font-style:normal;">03/12/2024</div><div class="a" style="left:0;top:244px;width:2265px;height:2px;background:#DDE1E8"></div><div class="t" style="left:10.0px;width:60px;text-align:center;top:190.3px;font-size:29px;color:#6a6a6a;font-weight:400;font-style:normal">3</div><div class="a" style="left:101px;top:184px;width:40px;height:40px"><svg class="a" style="left:0px;top:0px;filter:drop-shadow(0 3px 3px rgba(0,0,0,0.12))" width="40" height="40" viewBox="0 0 40 40"><rect width="40" height="40" rx="8" fill="#64A9E3"/><rect x="10.9" y="10.6" width="18.2" height="18.4" rx="2.2" fill="none" stroke="#fff" stroke-width="2.3"/><circle cx="19.9" cy="19.9" r="3.4" fill="none" stroke="#fff" stroke-width="2.3"/></svg></div><div class="t" style="left:186.0px;top:193.8px;font-size:29px;color:#1c1c1c;font-weight:400;font-style:normal;">Review existing sales pipeline stag...</div><svg class="a" style="left:711px;top:175px" width="60" height="60" viewBox="0 0 60 60"><defs><clipPath id="c2"><circle cx="30" cy="30" r="19.2"/></clipPath></defs><circle cx="30" cy="30" r="23.8" fill="#E3E5EA"/><circle cx="30" cy="30" r="19.9" fill="#fff"/><g clip-path="url(#c2)"><rect x="0" y="0" width="60" height="60" fill="#DDEBF8"/><path d="M19.6 39.5 C 19 32, 19.2 24, 21.5 20 C 23.8 16.5, 27 15.6, 30 15.6 C 33.5 15.6, 37 17, 38.8 20.5 C 40.6 24, 40.4 32, 39.8 39.5 Z" fill="#2A2B31"/><path d="M22.8 28 C 22.8 22.5, 26 20.5, 30.8 20.5 C 35.5 20.5, 38.6 22.5, 38.6 28 C 38.6 34, 35.2 37.6, 30.8 37.6 C 26.3 37.6, 22.8 34, 22.8 28 Z" fill="#E9A481"/><path d="M22 30 C 21.5 21, 25.5 17.5, 30.5 17.5 C 35 17.5, 38.5 19.5, 38.7 24 C 36.5 22.3, 33 21.8, 29.5 22.5 C 26.5 23.2, 24 26, 22 30 Z" fill="#2A2B31"/><rect x="27.2" y="35" width="7.2" height="5" fill="#E09A78"/><circle cx="28.6" cy="27" r="0.8" fill="#333"/><circle cx="33.4" cy="27" r="0.8" fill="#333"/><path d="M14.5 50 L15.5 44.5 C 18 41.2, 24 39.6, 30.5 39.6 C 37 39.6, 43 41.2, 45.5 44.5 L46.5 50 Z" fill="#3F8B9B"/></g></svg><div class="t" style="left:778.0px;top:188.8px;font-size:29px;color:#1c1c1c;font-weight:400;font-style:normal;">Lucy</div><div class="a" style="left:1121px;top:182px;width:96px;height:44px;background:#5BB07F;border-radius:8px;box-shadow:0 2px 3px rgba(0,0,0,0.10)"></div><div class="t" style="left:1121px;width:96px;text-align:center;top:193.9px;font-size:21.5px;font-weight:700;color:#fff">DONE</div><svg class="a" style="left:1426px;top:197.5px" width="22" height="14" viewBox="0 0 22 14"><path d="M2.8 2.8 L11 11 L19.2 2.8" fill="none" stroke="#2B5BEF" stroke-width="2.5" stroke-linecap="round" stroke-linejoin="round"/></svg><div class="a" style="left:1709px;top:172.5px;width:64px;height:64px;box-sizing:border-box;border:2px solid #E6E8EE;border-radius:12px;background:#E9603F;background-clip:padding-box"></div><div class="t" style="left:1842.0px;top:189.7px;font-size:29.2px;color:#1c1c1c;font-weight:400;font-style:normal;">03/13/2024</div><div class="t" style="left:2241.8px;top:189.7px;font-size:29.2px;color:#1c1c1c;font-weight:400;font-style:normal;">03/13/2024</div><div class="a" style="left:0;top:326px;width:2265px;height:2px;background:#DDE1E8"></div><div class="t" style="left:10.0px;width:60px;text-align:center;top:272.4px;font-size:29px;color:#6a6a6a;font-weight:400;font-style:normal">4</div><div class="a" style="left:101px;top:266px;width:40px;height:40px"><svg class="a" style="left:0px;top:0px;filter:drop-shadow(0 3px 3px rgba(0,0,0,0.12))" width="40" height="40" viewBox="0 0 40 40"><rect width="40" height="40" rx="8" fill="#64A9E3"/><rect x="10.9" y="10.6" width="18.2" height="18.4" rx="2.2" fill="none" stroke="#fff" stroke-width="2.3"/><circle cx="19.9" cy="19.9" r="3.4" fill="none" stroke="#fff" stroke-width="2.3"/></svg></div><div class="t" style="left:186.0px;top:275.9px;font-size:29px;color:#1c1c1c;font-weight:400;font-style:normal;">Customize Salesforce opportunity ...</div><svg class="a" style="left:711px;top:257px" width="60" height="60" viewBox="0 0 60 60"><defs><clipPath id="c3"><circle cx="30" cy="30" r="19.2"/></clipPath></defs><circle cx="30" cy="30" r="23.8" fill="#E3E5EA"/><circle cx="30" cy="30" r="19.9" fill="#fff"/><g clip-path="url(#c3)"><rect x="0" y="0" width="60" height="60" fill="#DDEBF8"/><path d="M19.6 39.5 C 19 32, 19.2 24, 21.5 20 C 23.8 16.5, 27 15.6, 30 15.6 C 33.5 15.6, 37 17, 38.8 20.5 C 40.6 24, 40.4 32, 39.8 39.5 Z" fill="#2A2B31"/><path d="M22.8 28 C 22.8 22.5, 26 20.5, 30.8 20.5 C 35.5 20.5, 38.6 22.5, 38.6 28 C 38.6 34, 35.2 37.6, 30.8 37.6 C 26.3 37.6, 22.8 34, 22.8 28 Z" fill="#E9A481"/><path d="M22 30 C 21.5 21, 25.5 17.5, 30.5 17.5 C 35 17.5, 38.5 19.5, 38.7 24 C 36.5 22.3, 33 21.8, 29.5 22.5 C 26.5 23.2, 24 26, 22 30 Z" fill="#2A2B31"/><rect x="27.2" y="35" width="7.2" height="5" fill="#E09A78"/><circle cx="28.6" cy="27" r="0.8" fill="#333"/><circle cx="33.4" cy="27" r="0.8" fill="#333"/><path d="M14.5 50 L15.5 44.5 C 18 41.2, 24 39.6, 30.5 39.6 C 37 39.6, 43 41.2, 45.5 44.5 L46.5 50 Z" fill="#3F8B9B"/></g></svg><div class="t" style="left:778.0px;top:270.9px;font-size:29px;color:#1c1c1c;font-weight:400;font-style:normal;">Lucy</div><div class="a" style="left:1121px;top:264px;width:96px;height:44px;background:#5BB07F;border-radius:8px;box-shadow:0 2px 3px rgba(0,0,0,0.10)"></div><div class="t" style="left:1121px;width:96px;text-align:center;top:275.9px;font-size:21.5px;font-weight:700;color:#fff">DONE</div><svg class="a" style="left:1424px;top:274px" width="26" height="26" viewBox="0 0 26 26"><line x1="1" y1="3" x2="25" y2="3" stroke="#F5A623" stroke-width="2.6"/><line x1="1" y1="13" x2="25" y2="13" stroke="#F5A623" stroke-width="2.6"/><line x1="1" y1="23" x2="25" y2="23" stroke="#F5A623" stroke-width="2.6"/></svg><div class="a" style="left:1709px;top:254.5px;width:64px;height:64px;box-sizing:border-box;border:2px solid #E6E8EE;border-radius:12px;background:#4571DB;background-clip:padding-box"></div><div class="t" style="left:1842.0px;top:271.7px;font-size:29.2px;color:#1c1c1c;font-weight:400;font-style:normal;">03/15/2024</div><div class="t" style="left:2241.8px;top:271.7px;font-size:29.2px;color:#1c1c1c;font-weight:400;font-style:normal;">03/15/2024</div><div class="a" style="left:0;top:408px;width:2265px;height:2px;background:#DDE1E8"></div><div class="t" style="left:10.0px;width:60px;text-align:center;top:354.4px;font-size:29px;color:#6a6a6a;font-weight:400;font-style:normal">5</div><div class="a" style="left:101px;top:348px;width:40px;height:40px"><svg class="a" style="left:0px;top:0px;filter:drop-shadow(0 3px 3px rgba(0,0,0,0.12))" width="40" height="40" viewBox="0 0 40 40"><rect width="40" height="40" rx="8" fill="#64A9E3"/><rect x="10.9" y="10.6" width="18.2" height="18.4" rx="2.2" fill="none" stroke="#fff" stroke-width="2.3"/><circle cx="19.9" cy="19.9" r="3.4" fill="none" stroke="#fff" stroke-width="2.3"/></svg></div><div class="t" style="left:186.0px;top:357.9px;font-size:29px;color:#1c1c1c;font-weight:400;font-style:normal;">Test and validate the updated sale...</div><svg class="a" style="left:711px;top:339px" width="60" height="60" viewBox="0 0 60 60"><defs><clipPath id="c4"><circle cx="30" cy="30" r="19.2"/></clipPath></defs><circle cx="30" cy="30" r="23.8" fill="#E3E5EA"/><circle cx="30" cy="30" r="19.9" fill="#fff"/><g clip-path="url(#c4)"><rect x="0" y="0" width="60" height="60" fill="#A0B2C6"/><path d="M25.6 22.5 C 25.6 18, 27.5 16, 30.6 16 C 33.8 16, 35.7 18, 35.7 22.5 L35.7 26 C 35.7 29.5, 33.5 31, 30.6 31 C 27.8 31, 25.6 29.5, 25.6 26 Z" fill="#E6B592"/><path d="M25.5 21.5 C 25.3 17.5, 27.5 15.8, 30.6 15.8 C 33.8 15.8, 36 17.5, 35.8 21.5 C 34 19.5, 27.5 19.5, 25.5 21.5 Z" fill="#F2F2F5"/><path d="M25.8 24.2 C 26 29.5, 28 31.2, 30.6 31.2 C 33.2 31.2, 35.2 29.5, 35.4 24.2 C 34 26, 27.5 26, 25.8 24.2 Z" fill="#F1F1F5"/><line x1="26" y1="23" x2="35.2" y2="23" stroke="#8a8f99" stroke-width="0.9"/><rect x="28.2" y="30.5" width="4.8" height="2.2" fill="#D9A585"/><path d="M16 50 L17 39 C 18.5 34, 24 31.5, 30.6 31.5 C 37 31.5, 42.5 34, 44 39 L45 50 Z" fill="#5D6CC1"/></g></svg><div class="t" style="left:778.0px;top:352.9px;font-size:29px;color:#1c1c1c;font-weight:400;font-style:normal;">Karl .J</div><div class="a" style="left:1121px;top:346px;width:102px;height:44px;background:#7A8599;border-radius:8px;box-shadow:0 2px 3px rgba(0,0,0,0.10)"></div><div class="t" style="left:1121px;width:102px;text-align:center;top:357.9px;font-size:21.5px;font-weight:700;color:#fff">TO DO</div><svg class="a" style="left:1426px;top:361.5px" width="22" height="14" viewBox="0 0 22 14"><path d="M2.8 2.8 L11 11 L19.2 2.8" fill="none" stroke="#2B5BEF" stroke-width="2.5" stroke-linecap="round" stroke-linejoin="round"/></svg><div class="a" style="left:1709px;top:336.5px;width:64px;height:64px;box-sizing:border-box;border:2px solid #E6E8EE;border-radius:12px;background:#3E8BA6;background-clip:padding-box"></div><div class="t" style="left:1842.0px;top:353.7px;font-size:29.2px;color:#1c1c1c;font-weight:400;font-style:normal;">03/13/2024</div><div class="t" style="left:2241.8px;top:353.7px;font-size:29.2px;color:#1c1c1c;font-weight:400;font-style:normal;">03/13/2024</div><div class="a" style="left:0;top:490px;width:2265px;height:2px;background:#DDE1E8"></div><div class="t" style="left:10.0px;width:60px;text-align:center;top:436.4px;font-size:29px;color:#6a6a6a;font-weight:400;font-style:normal">6</div><div class="a" style="left:101px;top:430px;width:40px;height:40px"><svg class="a" style="left:0px;top:0px;filter:drop-shadow(0 3px 3px rgba(0,0,0,0.12))" width="40" height="40" viewBox="0 0 40 40"><rect width="40" height="40" rx="8" fill="#79B649"/><rect x="10.9" y="10.2" width="18.2" height="19" rx="2.2" fill="none" stroke="#fff" stroke-width="2.3"/><path d="M18.9 10.5 L18.9 20 L22.4 17.6 L25.9 20 L25.9 10.5 Z" fill="#fff"/><rect x="21.7" y="12" width="1.4" height="3" fill="#79B649"/></svg></div><div class="t" style="left:186.0px;top:439.9px;font-size:29px;color:#1c1c1c;font-weight:400;font-style:normal;">Implement Lead Scoring</div><svg class="a" style="left:711px;top:421px" width="60" height="60" viewBox="0 0 60 60"><defs><clipPath id="c5"><circle cx="30" cy="30" r="19.2"/></clipPath></defs><circle cx="30" cy="30" r="23.8" fill="#E3E5EA"/><circle cx="30" cy="30" r="19.9" fill="#fff"/><g clip-path="url(#c5)"><rect x="0" y="0" width="60" height="60" fill="#F0CBBB"/><path d="M24.3 24 C 24.3 19, 27 17, 30.4 17 C 33.8 17, 36.4 19, 36.4 24 L36.4 27 C 36.4 30.5, 33.8 32.5, 30.4 32.5 C 27 32.5, 24.3 30.5, 24.3 27 Z" fill="#F3CDB2"/><ellipse cx="23.8" cy="26.5" rx="1.3" ry="1.8" fill="#EFC2A5"/><ellipse cx="37" cy="26.5" rx="1.3" ry="1.8" fill="#EFC2A5"/><path d="M24 21.5 C 23.5 16.5, 27 13.6, 31 13.8 C 34.5 14, 37 16.5, 36.5 21.5 C 35 19.5, 33 19, 30.5 19.3 C 28 19.6, 25.5 20, 24 21.5 Z" fill="#5A4A44"/><rect x="27.3" y="23.5" width="1.2" height="1.2" fill="#8FB3C9"/><rect x="32.6" y="23.5" width="1.2" height="1.2" fill="#8FB3C9"/><path d="M27.3 28 C 28 30.3, 29.2 30.6, 30.4 30.6 C 31.6 30.6, 32.8 30.3, 33.3 28 Z" fill="#8E3A33"/><rect x="27.6" y="32" width="6.4" height="4.5" fill="#EBBFA2"/><path d="M15 50 L16 41 C 18 37.5, 24 35.8, 30.4 35.8 C 37 35.8, 43 37.5, 45 41 L46 50 Z" fill="#FAFAFC"/></g></svg><div class="t" style="left:778.0px;top:434.9px;font-size:29px;color:#1c1c1c;font-weight:400;font-style:normal;">Brian</div><div class="a" style="left:1121px;top:428px;width:102px;height:44px;background:#7A8599;border-radius:8px;box-shadow:0 2px 3px rgba(0,0,0,0.10)"></div><div class="t" style="left:1121px;width:102px;text-align:center;top:439.9px;font-size:21.5px;font-weight:700;color:#fff">TO DO</div><svg class="a" style="left:1426px;top:443.5px" width="22" height="14" viewBox="0 0 22 14"><path d="M2.8 2.8 L11 11 L19.2 2.8" fill="none" stroke="#2B5BEF" stroke-width="2.5" stroke-linecap="round" stroke-linejoin="round"/></svg><div class="a" style="left:1709px;top:418.5px;width:64px;height:64px;box-sizing:border-box;border:2px solid #E6E8EE;border-radius:12px;background:#5DB27F;background-clip:padding-box"></div><div class="t" style="left:1842.0px;top:435.7px;font-size:29.2px;color:#1c1c1c;font-weight:400;font-style:normal;">03/13/2024</div><div class="t" style="left:2241.8px;top:435.7px;font-size:29.2px;color:#1c1c1c;font-weight:400;font-style:normal;">03/13/2024</div><div class="a" style="left:0;top:572px;width:2265px;height:2px;background:#DDE1E8"></div><div class="t" style="left:10.0px;width:60px;text-align:center;top:518.4px;font-size:29px;color:#6a6a6a;font-weight:400;font-style:normal">7</div><div class="a" style="left:101px;top:512px;width:40px;height:40px"><svg class="a" style="left:0px;top:0px;filter:drop-shadow(0 3px 3px rgba(0,0,0,0.12))" width="40" height="40" viewBox="0 0 40 40"><rect width="40" height="40" rx="8" fill="#64A9E3"/><rect x="10.9" y="10.6" width="18.2" height="18.4" rx="2.2" fill="none" stroke="#fff" stroke-width="2.3"/><circle cx="19.9" cy="19.9" r="3.4" fill="none" stroke="#fff" stroke-width="2.3"/></svg></div><div class="t" style="left:186.0px;top:521.9px;font-size:29px;color:#1c1c1c;font-weight:400;font-style:normal;">Define criteria for lead scoring wit...</div><svg class="a" style="left:711px;top:503px" width="60" height="60" viewBox="0 0 60 60"><defs><clipPath id="c6"><circle cx="30" cy="30" r="19.2"/></clipPath></defs><circle cx="30" cy="30" r="23.8" fill="#E3E5EA"/><circle cx="30" cy="30" r="19.9" fill="#fff"/><g clip-path="url(#c6)"><rect x="0" y="0" width="60" height="60" fill="#A9C0E8"/><ellipse cx="22.6" cy="27.5" rx="1.3" ry="2" fill="#EBBBA5"/><ellipse cx="37.2" cy="27.5" rx="1.3" ry="2" fill="#EBBBA5"/><path d="M23.5 23 C 23.5 19, 26.5 17.5, 29.8 17.5 C 33.2 17.5, 36.1 19, 36.1 23 L36.1 28 C 36.1 31, 33 33, 29.8 33 C 26.6 33, 23.5 31, 23.5 28 Z" fill="#F1C8B3"/><path d="M23 24 C 22.5 19, 25.8 17.2, 29.8 17.2 C 33.8 17.2, 37 19, 36.5 24 C 35.8 21.5, 34 20.8, 29.8 20.8 C 25.8 20.8, 23.8 21.5, 23 24 Z" fill="#7B3B2B"/><circle cx="27.4" cy="26.8" r="0.8" fill="#222"/><circle cx="32.5" cy="26.8" r="0.8" fill="#222"/><path d="M23.9 28 C 24 33.5, 26.5 36, 29.8 36 C 33.2 36, 35.6 33.5, 35.7 28 C 34.5 30, 32.5 30.5, 29.8 30.5 C 27.2 30.5, 25 30, 23.9 28 Z" fill="#6B2E22"/><rect x="26.8" y="35.5" width="6" height="3" fill="#3F8FA6"/><path d="M16 50 L17 42 C 19 39.5, 24 38.3, 29.8 38.3 C 35.6 38.3, 41 39.5, 43 42 L44 50 Z" fill="#EEEBF8"/></g></svg><div class="t" style="left:778.0px;top:516.9px;font-size:29px;color:#1c1c1c;font-weight:400;font-style:normal;">Edward</div><div class="a" style="left:1121px;top:510px;width:102px;height:44px;background:#7A8599;border-radius:8px;box-shadow:0 2px 3px rgba(0,0,0,0.10)"></div><div class="t" style="left:1121px;width:102px;text-align:center;top:521.9px;font-size:21.5px;font-weight:700;color:#fff">TO DO</div><svg class="a" style="left:1426px;top:525.5px" width="22" height="14" viewBox="0 0 22 14"><path d="M2.8 2.8 L11 11 L19.2 2.8" fill="none" stroke="#2B5BEF" stroke-width="2.5" stroke-linecap="round" stroke-linejoin="round"/></svg><div class="a" style="left:1709px;top:500.5px;width:64px;height:64px;box-sizing:border-box;border:2px solid #E6E8EE;border-radius:12px;background:#4571DB;background-clip:padding-box"></div><div class="t" style="left:1842.0px;top:517.7px;font-size:29.2px;color:#1c1c1c;font-weight:400;font-style:normal;">03/21/2024</div><div class="t" style="left:2241.8px;top:517.7px;font-size:29.2px;color:#1c1c1c;font-weight:400;font-style:normal;">03/21/2024</div><div class="a" style="left:0;top:654px;width:2265px;height:2px;background:#DDE1E8"></div><div class="t" style="left:10.0px;width:60px;text-align:center;top:600.4px;font-size:29px;color:#6a6a6a;font-weight:400;font-style:normal">8</div><div class="a" style="left:101px;top:594px;width:40px;height:40px"><svg class="a" style="left:0px;top:0px;filter:drop-shadow(0 3px 3px rgba(0,0,0,0.12))" width="40" height="40" viewBox="0 0 40 40"><rect width="40" height="40" rx="8" fill="#64A9E3"/><rect x="10.9" y="10.6" width="18.2" height="18.4" rx="2.2" fill="none" stroke="#fff" stroke-width="2.3"/><circle cx="19.9" cy="19.9" r="3.4" fill="none" stroke="#fff" stroke-width="2.3"/></svg></div><div class="t" style="left:186.0px;top:603.9px;font-size:29px;color:#1c1c1c;font-weight:400;font-style:normal;">Configure lead scoring rules in Sal...</div><svg class="a" style="left:711px;top:585px" width="60" height="60" viewBox="0 0 60 60"><defs><clipPath id="c7"><circle cx="30" cy="30" r="19.2"/></clipPath></defs><circle cx="30" cy="30" r="23.8" fill="#E3E5EA"/><circle cx="30" cy="30" r="19.9" fill="#fff"/><g clip-path="url(#c7)"><rect x="0" y="0" width="60" height="60" fill="#DDEBF8"/><path d="M19.6 39.5 C 19 32, 19.2 24, 21.5 20 C 23.8 16.5, 27 15.6, 30 15.6 C 33.5 15.6, 37 17, 38.8 20.5 C 40.6 24, 40.4 32, 39.8 39.5 Z" fill="#2A2B31"/><path d="M22.8 28 C 22.8 22.5, 26 20.5, 30.8 20.5 C 35.5 20.5, 38.6 22.5, 38.6 28 C 38.6 34, 35.2 37.6, 30.8 37.6 C 26.3 37.6, 22.8 34, 22.8 28 Z" fill="#E9A481"/><path d="M22 30 C 21.5 21, 25.5 17.5, 30.5 17.5 C 35 17.5, 38.5 19.5, 38.7 24 C 36.5 22.3, 33 21.8, 29.5 22.5 C 26.5 23.2, 24 26, 22 30 Z" fill="#2A2B31"/><rect x="27.2" y="35" width="7.2" height="5" fill="#E09A78"/><circle cx="28.6" cy="27" r="0.8" fill="#333"/><circle cx="33.4" cy="27" r="0.8" fill="#333"/><path d="M14.5 50 L15.5 44.5 C 18 41.2, 24 39.6, 30.5 39.6 C 37 39.6, 43 41.2, 45.5 44.5 L46.5 50 Z" fill="#3F8B9B"/></g></svg><div class="t" style="left:778.0px;top:598.9px;font-size:29px;color:#1c1c1c;font-weight:400;font-style:normal;">Lucy</div><div class="a" style="left:1121px;top:592px;width:117px;height:44px;background:#6354BD;border-radius:8px;box-shadow:0 2px 3px rgba(0,0,0,0.10)"></div><div class="t" style="left:1121px;width:117px;text-align:center;top:603.9px;font-size:21.5px;font-weight:700;color:#fff">REVIEW</div><svg class="a" style="left:1426px;top:607.5px" width="22" height="14" viewBox="0 0 22 14"><path d="M2.8 2.8 L11 11 L19.2 2.8" fill="none" stroke="#2B5BEF" stroke-width="2.5" stroke-linecap="round" stroke-linejoin="round"/></svg><div class="a" style="left:1709px;top:582.5px;width:64px;height:64px;box-sizing:border-box;border:2px solid #E6E8EE;border-radius:12px;background:#F1AD3C;background-clip:padding-box"></div><div class="t" style="left:1842.0px;top:599.7px;font-size:29.2px;color:#1c1c1c;font-weight:400;font-style:normal;">03/14/2024</div><div class="t" style="left:2241.8px;top:599.7px;font-size:29.2px;color:#1c1c1c;font-weight:400;font-style:normal;">03/14/2024</div><div class="a" style="left:0;top:736px;width:2265px;height:2px;background:#DDE1E8"></div><div class="t" style="left:10.0px;width:60px;text-align:center;top:682.4px;font-size:29px;color:#6a6a6a;font-weight:400;font-style:normal">9</div><div class="a" style="left:101px;top:676px;width:40px;height:40px"><svg class="a" style="left:0px;top:0px;filter:drop-shadow(0 3px 3px rgba(0,0,0,0.12))" width="40" height="40" viewBox="0 0 40 40"><rect width="40" height="40" rx="8" fill="#64A9E3"/><rect x="10.9" y="10.6" width="18.2" height="18.4" rx="2.2" fill="none" stroke="#fff" stroke-width="2.3"/><circle cx="19.9" cy="19.9" r="3.4" fill="none" stroke="#fff" stroke-width="2.3"/></svg></div><div class="t" style="left:186.0px;top:685.9px;font-size:29px;color:#1c1c1c;font-weight:400;font-style:normal;">Create documentation on lead sco...</div><svg class="a" style="left:711px;top:667px" width="60" height="60" viewBox="0 0 60 60"><defs><clipPath id="c8"><circle cx="30" cy="30" r="19.2"/></clipPath></defs><circle cx="30" cy="30" r="23.8" fill="#E3E5EA"/><circle cx="30" cy="30" r="19.9" fill="#fff"/><g clip-path="url(#c8)"><rect x="0" y="0" width="60" height="60" fill="#A9C3EA"/><path d="M19 30 C 17 26, 18.5 21, 21.5 19.5 C 23 16.5, 27 15.8, 30 16.5 C 33.5 15.5, 37.5 17, 39 19.5 C 42 21, 43 26, 41.5 30 C 43 33, 41 35.8, 38 35.5 L22.5 35.5 C 19.5 35.8, 17.5 33, 19 30 Z" fill="#D98C8C"/><path d="M22.8 26 C 22.8 22, 25.8 21, 29.6 21 C 33.4 21, 36.4 22, 36.4 26 L36.4 30 C 36.4 33.5, 33.5 35.8, 29.6 35.8 C 25.8 35.8, 22.8 33.5, 22.8 30 Z" fill="#C9866A"/><path d="M22 26 C 23 22, 26 20.5, 30 20.5 C 27.5 22.5, 25 24, 22 26 Z" fill="#D98C8C"/><circle cx="27.4" cy="27.2" r="0.8" fill="#222"/><circle cx="32.6" cy="27.2" r="0.8" fill="#222"/><rect x="27.2" y="35" width="6.5" height="5" fill="#C07D62"/><path d="M17 50 L18 43 C 20 41, 24.5 40.3, 29.6 40.3 C 34.8 40.3, 39.5 41, 41.5 43 L42.5 50 Z" fill="#F4F7FC"/></g></svg><div class="t" style="left:778.0px;top:680.9px;font-size:29px;color:#1c1c1c;font-weight:400;font-style:normal;">Susan</div><div class="a" style="left:1121px;top:674px;width:102px;height:44px;background:#7A8599;border-radius:8px;box-shadow:0 2px 3px rgba(0,0,0,0.10)"></div><div class="t" style="left:1121px;width:102px;text-align:center;top:685.9px;font-size:21.5px;font-weight:700;color:#fff">TO DO</div><svg class="a" style="left:1426px;top:689.5px" width="22" height="14" viewBox="0 0 22 14"><path d="M2.8 2.8 L11 11 L19.2 2.8" fill="none" stroke="#2B5BEF" stroke-width="2.5" stroke-linecap="round" stroke-linejoin="round"/></svg><div class="a" style="left:1709px;top:664.5px;width:64px;height:64px;box-sizing:border-box;border:2px solid #E6E8EE;border-radius:12px;background:#4571DB;background-clip:padding-box"></div><div class="t" style="left:1842.0px;top:681.7px;font-size:29.2px;color:#1c1c1c;font-weight:400;font-style:normal;">03/11/2024</div><div class="t" style="left:2241.8px;top:681.7px;font-size:29.2px;color:#1c1c1c;font-weight:400;font-style:normal;">03/11/2024</div><div class="a" style="left:0;top:818px;width:2265px;height:2px;background:#DDE1E8"></div><div class="t" style="left:10.0px;width:60px;text-align:center;top:764.4px;font-size:29px;color:#6a6a6a;font-weight:400;font-style:normal">10</div><div class="a" style="left:101px;top:758px;width:40px;height:40px"><svg class="a" style="left:0px;top:0px;filter:drop-shadow(0 3px 3px rgba(0,0,0,0.12))" width="40" height="40" viewBox="0 0 40 40"><rect width="40" height="40" rx="8" fill="#6354BD"/><path d="M30.9 18.4 A 10.4 10.4 0 1 1 21.4 9.2" fill="none" stroke="#fff" stroke-width="2.9" stroke-linecap="round"/><path d="M25.9 19.4 A 5.9 5.9 0 1 1 20.3 14.1" fill="none" stroke="#fff" stroke-width="2.9" stroke-linecap="round"/><circle cx="19.9" cy="19.9" r="2.4" fill="#fff"/><line x1="19.9" y1="19.9" x2="26.5" y2="13.3" stroke="#fff" stroke-width="2.9" stroke-linecap="round"/><path d="M24.2 14.6 L25.2 8.6 L27.8 11.0 L31.6 13.6 L26.3 16.6 Z" fill="#fff"/><path d="M26.4 11.8 L27.4 14.0 L28.6 13.2 Z" fill="#6354BD"/></svg></div><div class="t" style="left:186.0px;top:767.9px;font-size:29px;color:#1c1c1c;font-weight:400;font-style:normal;">Data Migration and Integrity</div><svg class="a" style="left:711px;top:749px" width="60" height="60" viewBox="0 0 60 60"><defs><clipPath id="c9"><circle cx="30" cy="30" r="19.2"/></clipPath></defs><circle cx="30" cy="30" r="23.8" fill="#E3E5EA"/><circle cx="30" cy="30" r="19.9" fill="#fff"/><g clip-path="url(#c9)"><rect x="0" y="0" width="60" height="60" fill="#A0B2C6"/><path d="M25.6 22.5 C 25.6 18, 27.5 16, 30.6 16 C 33.8 16, 35.7 18, 35.7 22.5 L35.7 26 C 35.7 29.5, 33.5 31, 30.6 31 C 27.8 31, 25.6 29.5, 25.6 26 Z" fill="#E6B592"/><path d="M25.5 21.5 C 25.3 17.5, 27.5 15.8, 30.6 15.8 C 33.8 15.8, 36 17.5, 35.8 21.5 C 34 19.5, 27.5 19.5, 25.5 21.5 Z" fill="#F2F2F5"/><path d="M25.8 24.2 C 26 29.5, 28 31.2, 30.6 31.2 C 33.2 31.2, 35.2 29.5, 35.4 24.2 C 34 26, 27.5 26, 25.8 24.2 Z" fill="#F1F1F5"/><line x1="26" y1="23" x2="35.2" y2="23" stroke="#8a8f99" stroke-width="0.9"/><rect x="28.2" y="30.5" width="4.8" height="2.2" fill="#D9A585"/><path d="M16 50 L17 39 C 18.5 34, 24 31.5, 30.6 31.5 C 37 31.5, 42.5 34, 44 39 L45 50 Z" fill="#5D6CC1"/></g></svg><div class="t" style="left:778.0px;top:762.9px;font-size:29px;color:#1c1c1c;font-weight:400;font-style:normal;">Karl .J</div><div class="a" style="left:1121px;top:756px;width:181px;height:44px;background:#F2AE3F;border-radius:8px;box-shadow:0 2px 3px rgba(0,0,0,0.10)"></div><div class="t" style="left:1121px;width:181px;text-align:center;top:767.9px;font-size:21.5px;font-weight:700;color:#fff">IN PROGRESS</div><svg class="a" style="left:1426px;top:771.5px" width="22" height="14" viewBox="0 0 22 14"><path d="M2.8 2.8 L11 11 L19.2 2.8" fill="none" stroke="#2B5BEF" stroke-width="2.5" stroke-linecap="round" stroke-linejoin="round"/></svg><div class="a" style="left:1709px;top:746.5px;width:64px;height:64px;box-sizing:border-box;border:2px solid #E6E8EE;border-radius:12px;background:#24613F;background-clip:padding-box"></div><div class="t" style="left:1842.0px;top:763.7px;font-size:29.2px;color:#1c1c1c;font-weight:400;font-style:normal;">03/18/2024</div><div class="t" style="left:2241.8px;top:763.7px;font-size:29.2px;color:#1c1c1c;font-weight:400;font-style:normal;">03/18/2024</div><div class="a" style="left:0;top:900px;width:2265px;height:2px;background:#DDE1E8"></div><div class="t" style="left:10.0px;width:60px;text-align:center;top:846.4px;font-size:29px;color:#6a6a6a;font-weight:400;font-style:normal">11</div><div class="a" style="left:101px;top:840px;width:40px;height:40px"><svg class="a" style="left:0px;top:0px;filter:drop-shadow(0 3px 3px rgba(0,0,0,0.12))" width="40" height="40" viewBox="0 0 40 40"><rect width="40" height="40" rx="8" fill="#79B649"/><rect x="10.9" y="10.2" width="18.2" height="19" rx="2.2" fill="none" stroke="#fff" stroke-width="2.3"/><path d="M18.9 10.5 L18.9 20 L22.4 17.6 L25.9 20 L25.9 10.5 Z" fill="#fff"/><rect x="21.7" y="12" width="1.4" height="3" fill="#79B649"/></svg></div><div class="t" style="left:186.0px;top:849.9px;font-size:29px;color:#1c1c1c;font-weight:400;font-style:normal;">Data Cleaning and Preparation</div><svg class="a" style="left:711px;top:831px" width="60" height="60" viewBox="0 0 60 60"><defs><clipPath id="c10"><circle cx="30" cy="30" r="19.2"/></clipPath></defs><circle cx="30" cy="30" r="23.8" fill="#E3E5EA"/><circle cx="30" cy="30" r="19.9" fill="#fff"/><g clip-path="url(#c10)"><rect x="0" y="0" width="60" height="60" fill="#F0CBBB"/><path d="M24.3 24 C 24.3 19, 27 17, 30.4 17 C 33.8 17, 36.4 19, 36.4 24 L36.4 27 C 36.4 30.5, 33.8 32.5, 30.4 32.5 C 27 32.5, 24.3 30.5, 24.3 27 Z" fill="#F3CDB2"/><ellipse cx="23.8" cy="26.5" rx="1.3" ry="1.8" fill="#EFC2A5"/><ellipse cx="37" cy="26.5" rx="1.3" ry="1.8" fill="#EFC2A5"/><path d="M24 21.5 C 23.5 16.5, 27 13.6, 31 13.8 C 34.5 14, 37 16.5, 36.5 21.5 C 35 19.5, 33 19, 30.5 19.3 C 28 19.6, 25.5 20, 24 21.5 Z" fill="#5A4A44"/><rect x="27.3" y="23.5" width="1.2" height="1.2" fill="#8FB3C9"/><rect x="32.6" y="23.5" width="1.2" height="1.2" fill="#8FB3C9"/><path d="M27.3 28 C 28 30.3, 29.2 30.6, 30.4 30.6 C 31.6 30.6, 32.8 30.3, 33.3 28 Z" fill="#8E3A33"/><rect x="27.6" y="32" width="6.4" height="4.5" fill="#EBBFA2"/><path d="M15 50 L16 41 C 18 37.5, 24 35.8, 30.4 35.8 C 37 35.8, 43 37.5, 45 41 L46 50 Z" fill="#FAFAFC"/></g></svg><div class="t" style="left:778.0px;top:844.9px;font-size:29px;color:#1c1c1c;font-weight:400;font-style:normal;">Brian</div><div class="a" style="left:1121px;top:838px;width:181px;height:44px;background:#F2AE3F;border-radius:8px;box-shadow:0 2px 3px rgba(0,0,0,0.10)"></div><div class="t" style="left:1121px;width:181px;text-align:center;top:849.9px;font-size:21.5px;font-weight:700;color:#fff">IN PROGRESS</div><svg class="a" style="left:1426px;top:853.5px" width="22" height="14" viewBox="0 0 22 14"><path d="M2.8 2.8 L11 11 L19.2 2.8" fill="none" stroke="#2B5BEF" stroke-width="2.5" stroke-linecap="round" stroke-linejoin="round"/></svg><div class="a" style="left:1709px;top:828.5px;width:64px;height:64px;box-sizing:border-box;border:2px solid #E6E8EE;border-radius:12px;background:#4571DB;background-clip:padding-box"></div><div class="t" style="left:1842.0px;top:845.7px;font-size:29.2px;color:#1c1c1c;font-weight:400;font-style:normal;">03/11/2024</div><div class="t" style="left:2241.8px;top:845.7px;font-size:29.2px;color:#1c1c1c;font-weight:400;font-style:normal;">03/11/2024</div><div class="a" style="left:0;top:982px;width:2265px;height:2px;background:#DDE1E8"></div><div class="t" style="left:10.0px;width:60px;text-align:center;top:928.4px;font-size:29px;color:#6a6a6a;font-weight:400;font-style:normal">12</div><div class="a" style="left:101px;top:922px;width:40px;height:40px"><svg class="a" style="left:0px;top:0px;filter:drop-shadow(0 3px 3px rgba(0,0,0,0.12))" width="40" height="40" viewBox="0 0 40 40"><rect width="40" height="40" rx="8" fill="#64A9E3"/><rect x="10.9" y="10.6" width="18.2" height="18.4" rx="2.2" fill="none" stroke="#fff" stroke-width="2.3"/><circle cx="19.9" cy="19.9" r="3.4" fill="none" stroke="#fff" stroke-width="2.3"/></svg></div><div class="t" style="left:186.0px;top:931.9px;font-size:29px;color:#1c1c1c;font-weight:400;font-style:normal;">Identify and document sources of ...</div><svg class="a" style="left:711px;top:913px" width="60" height="60" viewBox="0 0 60 60"><defs><clipPath id="c11"><circle cx="30" cy="30" r="19.2"/></clipPath></defs><circle cx="30" cy="30" r="23.8" fill="#E3E5EA"/><circle cx="30" cy="30" r="19.9" fill="#fff"/><g clip-path="url(#c11)"><rect x="0" y="0" width="60" height="60" fill="#F0CBBB"/><path d="M24.3 24 C 24.3 19, 27 17, 30.4 17 C 33.8 17, 36.4 19, 36.4 24 L36.4 27 C 36.4 30.5, 33.8 32.5, 30.4 32.5 C 27 32.5, 24.3 30.5, 24.3 27 Z" fill="#F3CDB2"/><ellipse cx="23.8" cy="26.5" rx="1.3" ry="1.8" fill="#EFC2A5"/><ellipse cx="37" cy="26.5" rx="1.3" ry="1.8" fill="#EFC2A5"/><path d="M24 21.5 C 23.5 16.5, 27 13.6, 31 13.8 C 34.5 14, 37 16.5, 36.5 21.5 C 35 19.5, 33 19, 30.5 19.3 C 28 19.6, 25.5 20, 24 21.5 Z" fill="#5A4A44"/><rect x="27.3" y="23.5" width="1.2" height="1.2" fill="#8FB3C9"/><rect x="32.6" y="23.5" width="1.2" height="1.2" fill="#8FB3C9"/><path d="M27.3 28 C 28 30.3, 29.2 30.6, 30.4 30.6 C 31.6 30.6, 32.8 30.3, 33.3 28 Z" fill="#8E3A33"/><rect x="27.6" y="32" width="6.4" height="4.5" fill="#EBBFA2"/><path d="M15 50 L16 41 C 18 37.5, 24 35.8, 30.4 35.8 C 37 35.8, 43 37.5, 45 41 L46 50 Z" fill="#FAFAFC"/></g></svg><div class="t" style="left:778.0px;top:926.9px;font-size:29px;color:#1c1c1c;font-weight:400;font-style:normal;">Brian</div><div class="a" style="left:1121px;top:920px;width:181px;height:44px;background:#F2AE3F;border-radius:8px;box-shadow:0 2px 3px rgba(0,0,0,0.10)"></div><div class="t" style="left:1121px;width:181px;text-align:center;top:931.9px;font-size:21.5px;font-weight:700;color:#fff">IN PROGRESS</div><svg class="a" style="left:1426px;top:935.5px" width="22" height="14" viewBox="0 0 22 14"><path d="M2.8 11.2 L11 3 L19.2 11.2" fill="none" stroke="#E8553E" stroke-width="2.5" stroke-linecap="round" stroke-linejoin="round"/></svg><div class="a" style="left:1709px;top:910.5px;width:64px;height:64px;box-sizing:border-box;border:2px solid #E6E8EE;border-radius:12px;background:#0F1E3F;background-clip:padding-box"></div><div class="t" style="left:1842.0px;top:927.7px;font-size:29.2px;color:#1c1c1c;font-weight:400;font-style:normal;">03/14/2024</div><div class="t" style="left:2241.8px;top:927.7px;font-size:29.2px;color:#1c1c1c;font-weight:400;font-style:normal;">03/14/2024</div></div><div class="a" style="left:2867.5px;top:386px;width:2.5px;height:533px;background:#939BA8;border-radius:2px"></div><svg class="a" style="left:656px;top:1484px" width="26" height="26" viewBox="0 0 26 26"><line x1="13" y1="2" x2="13" y2="24" stroke="#1c1c1c" stroke-width="2.8"/><line x1="2" y1="13" x2="24" y2="13" stroke="#1c1c1c" stroke-width="2.8"/></svg><div class="t" style="left:701.0px;top:1482.8px;font-size:27.3px;color:#1c1c1c;font-weight:400;font-style:normal;">Add new item</div>
</body></html>
